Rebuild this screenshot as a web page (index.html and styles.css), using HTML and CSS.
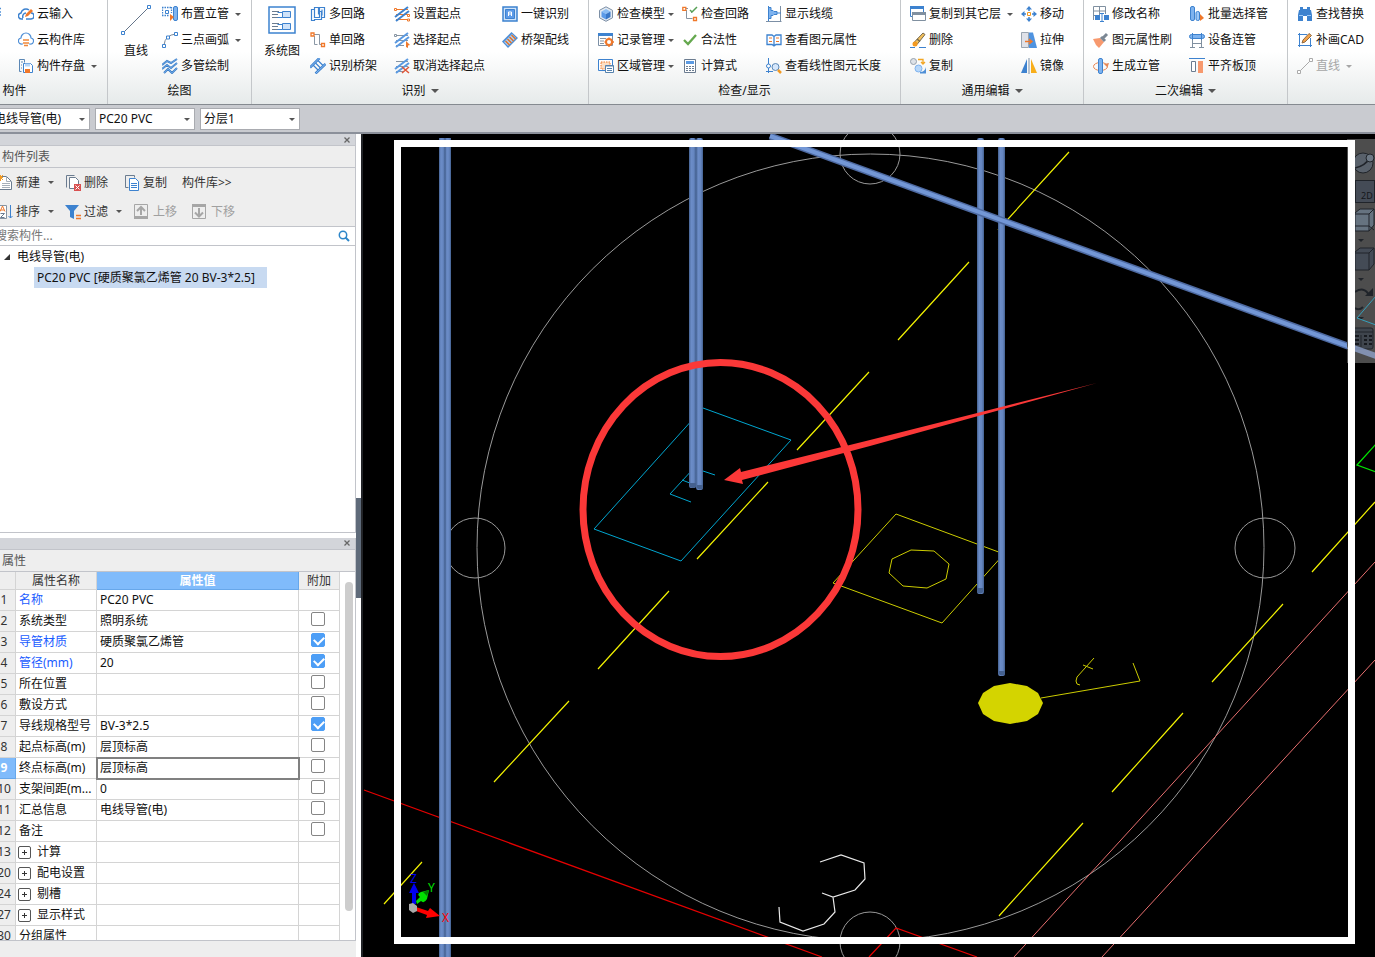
FILE: index.html
```html
<!DOCTYPE html>
<html lang="zh-CN">
<head>
<meta charset="utf-8">
<title>构件列表</title>
<link rel="stylesheet" href="styles.css">
</head>
<body>
<svg class="defs" aria-hidden="true">
  <symbol id="cloud-pen" viewBox="0 0 16 16"><path d="M5 13H4a3 3 0 0 1-1-6 5 5 0 0 1 8-3M13 7a3 3 0 0 1 0 6H8M5 12c-1-3 1-5 3-5" fill="none" stroke="#3d82cf" stroke-width="1.5"/><path d="M7 11l1-3 5-5 2 2-5 5z" fill="#f0782a"/></symbol>
  <symbol id="cloud-db" viewBox="0 0 16 16"><path d="M5 12H4a3 3 0 0 1-1-6 5 5 0 0 1 10 0 3 3 0 0 1-1 6h-1" fill="none" stroke="#4f8fd6" stroke-width="1.2"/><path d="M5 8h6M5 11h6M6 13.500h4" stroke="#f0883a" stroke-width="1.600"/></symbol>
  <symbol id="disk" viewBox="0 0 16 16"><path d="M1.500 13.500v-12h5v3M1.500 13.500h2M3 4h2M3 7h1M3 10h1" fill="none" stroke="#5b87b5"/><path d="M5.500 5.500h7l2 2v7h-9z" fill="#fff" stroke="#3d82cf"/><path d="M7 5.500h5v3H7z" fill="#b8d6f6"/><path d="M7 11h5v4H7z" fill="#f0782a"/></symbol>
  <symbol id="line" viewBox="0 0 30 30"><path d="M3 27L27 3" stroke="#65758a"/><path d="M.5 26.500h3v3h-3zM26.500.5h3v3h-3z" fill="#fff" stroke="#3d82cf"/></symbol>
  <symbol id="riser" viewBox="0 0 16 16"><path d="M0 1.500h10M0 9.500h7M.5 1v9M9.500 1v6" fill="none" stroke="#3d82cf" stroke-width="1.300" stroke-dasharray="1.500 1"/><path d="M3.500 4.500h3v3h-3z" fill="none" stroke="#3d82cf"/><rect x="11.500" y=".5" width="4" height="14" rx="1.500" fill="#7eb3ef" stroke="#3d82cf"/><path d="M8 8l4 3-4 4z" fill="#f0782a"/></symbol>
  <symbol id="arc" viewBox="0 0 16 16"><path d="M2 13Q3 3 14 2" fill="none" stroke="#7a8796"/><path d="M.5 12.500h3v3h-3zM12.500.5h3v3h-3zM4.500 4h3v3h-3z" fill="#fff" stroke="#3d82cf"/></symbol>
  <symbol id="pipes" viewBox="0 0 16 16"><path d="M0 7l5-4 4 2 6-4M0 11l5-4 4 3 6-5M2 15l4-4 4 4 5-5" fill="none" stroke="#3d7fc8" stroke-width="2"/><path d="M0 7l5-4 4 2 6-4M0 11l5-4 4 3 6-5M2 15l4-4 4 4 5-5" fill="none" stroke="#83b8f2" stroke-width=".6"/></symbol>
  <symbol id="system" viewBox="0 0 28 28"><path d="M1 1h26v26H1z" fill="#fff" stroke="#3d82cf" stroke-width="1.500"/><path d="M4 5.500h7M4 11.500h7M4 17.500h7M4 23.500h7M4 8.500h6M4 20.500h6" stroke="#6b7c90"/><path d="M9.500 6.500h5v5h-5M9.500 18.500h5v5h-5" fill="none" stroke="#3d82cf"/><path d="M14.500 5.500h8v6h-8zM14.500 17.500h8v6h-8z" fill="#cfe3fa" stroke="#3d82cf"/></symbol>
  <symbol id="multi" viewBox="0 0 16 16"><path d="M1.500 3.500h3v8h5v-6h2v8h-7v1h-3zM4.500 3.500v-2h4v7M9.500 5.500v-4h5v10h-3M12 3.500v6" fill="none" stroke="#3d82cf" stroke-width="1.200"/></symbol>
  <symbol id="single" viewBox="0 0 16 16"><path d="M4 2.500h5.500v10H13M4.500 4v8.500h3" fill="none" stroke="#8a97a5"/><path d="M1 1h3v3H1zM11.500 11.500h3v3h-3z" fill="#fff" stroke="#f0782a" stroke-width="1.300"/></symbol>
  <symbol id="bridge" viewBox="0 0 16 16"><path d="M3 7l6 6M5.500 5l6 6M8 2.500l6 6" stroke="#3d82cf" stroke-width="1.200"/><path d="M0 9.500L9.500 0M5.500 15.500L15.500 6" stroke="#3d82cf" stroke-width="2.500"/><path d="M0 9.500L9.500 0M5.500 15.500L15.500 6" stroke="#9cc8f8" stroke-width=".8"/></symbol>
  <symbol id="set-start" viewBox="0 0 16 16"><path d="M2 3.500h12M2 8.500h12M2 13.500h12" stroke="#f0782a"/><path d="M1 11L14 1M2 15L15 5" stroke="#3d82cf" stroke-width="2"/><path d="M.5 2.500h2v2h-2zM13.500 8.500h2v2h-2zM13.500 13h2v2h-2z" fill="#fff" stroke="#f0782a"/></symbol>
  <symbol id="pick-start" viewBox="0 0 16 16"><path d="M2 3.500h12M2 8.500h12M2 13.500h8" stroke="#8794a2"/><path d="M1 11L14 1M2 15L15 5" stroke="#5b9ae2" stroke-width="2"/><path d="M.5 2.500h2v2h-2z" fill="#fff" stroke="#8794a2"/><path d="M12 9l4 4-2 .5v2.500l-2-1z" fill="#f0782a"/></symbol>
  <symbol id="drop-start" viewBox="0 0 16 16"><path d="M2 3.500h12M2 8.500h12M2 13.500h8" stroke="#8794a2"/><path d="M1 11L14 1M2 15L15 5" stroke="#5b9ae2" stroke-width="2"/><path d="M8 9l7 6M15 9l-7 6" stroke="#df5638" stroke-width="1.500"/></symbol>
  <symbol id="onekey" viewBox="0 0 16 16"><path d="M1 1h14v14H1z" fill="#cfe3fa" stroke="#3d82cf" stroke-width="1.500"/><path d="M3.500 3.500h9v9h-9z" fill="#5b9ae8" stroke="#3d82cf"/><path d="M6.500 10V6h3v4M6.500 8h3" fill="none" stroke="#fff"/></symbol>
  <symbol id="bridge-wire" viewBox="0 0 16 16"><path d="M0 9.500L9.500 0 16 6 6 16z" fill="#4f8fd6"/><path d="M2 10l8-8 4 4-8 8z" fill="#a9cdf5"/><path d="M3.500 9l4 4M5.500 7l4 4M7.500 5l4 4M9.500 3l4 4" stroke="#e2701f" stroke-width="1.300"/></symbol>
  <symbol id="cube" viewBox="0 0 16 16"><path d="M8 .8l6.500 3.500v7.500L8 15.300l-6.500-3.500V4.300z" fill="#e3eaf2" stroke="#7c8fa5"/><path d="M8 3l4.500 2.500L8 8 3.500 5.500z" fill="#8bbdf4"/><path d="M3.500 5.500L8 8v5.500L3.500 11z" fill="#5b9ae8"/><path d="M12.500 5.500L8 8v5.500l4.500-2.500z" fill="#3977c7"/></symbol>
  <symbol id="record" viewBox="0 0 16 16"><path d="M.5 1.500h14v12H.5z" fill="#fff" stroke="#7c8fa5"/><path d="M0 1h15v3H0z" fill="#3d82cf"/><path d="M2 6.500h6M2 9h4M2 11.500h4" stroke="#8794a2"/><circle cx="11" cy="10" r="3" fill="#fff" stroke="#f0782a" stroke-width="2"/><path d="M11 5.500v2M11 12.500V15M6.500 10h2M13.500 10H16" stroke="#f0782a" stroke-width="1.500"/></symbol>
  <symbol id="area" viewBox="0 0 16 16"><path d="M.5 1.500h14v11H.5z" fill="#fff" stroke="#3d82cf"/><path d="M3 4h9v7H3z" fill="#fde0c6" stroke="#f0782a" stroke-dasharray="1.500 1"/><path d="M7.500 7.500h8v7h-8z" fill="#fff" stroke="#5682ad"/><path d="M7.500 8h8M9 10.500h5M9 12.500h5" stroke="#5682ad"/></symbol>
  <symbol id="check-loop" viewBox="0 0 16 16"><path d="M3 2.500h3M4.500 4v8.500h6M9.500 7V5" fill="none" stroke="#8794a2"/><path d="M.8 1.300h3v3h-3zM11.500 11.500h3v3h-3z" fill="#fff" stroke="#f0782a" stroke-width="1.300"/><path d="M8 4l2 2 5-5" fill="none" stroke="#56a056" stroke-width="1.500"/></symbol>
  <symbol id="tick" viewBox="0 0 16 16"><path d="M2 8l4 4 8-9" fill="none" stroke="#65a84e" stroke-width="2.300"/></symbol>
  <symbol id="calc" viewBox="0 0 16 16"><path d="M2.500 1.500h11v13h-11z" fill="#fff" stroke="#6b7c90"/><path d="M4 3h8v3H4z" fill="#5b9ae2"/><path d="M4 8.500h8M4 10.500h8M4 12.500h8" stroke="#6b7c90" stroke-dasharray="2 1"/></symbol>
  <symbol id="cable" viewBox="0 0 16 16"><path d="M0 15.500h15.500M14.500 0v15" stroke="#7c8fa5"/><path d="M2.500 0v15" stroke="#3d82cf"/><path d="M2.500 1.500h2.500v3h2l1 1h3v3H8l-1 1H5v3H2.500z" fill="#7eb3ef" stroke="#3d82cf"/><path d="M11 7h4" stroke="#3d82cf"/></symbol>
  <symbol id="book" viewBox="0 0 16 16"><path d="M1 3h5l2 1.500L10 3h5v9.500h-5L8 14l-2-1.500H1zM8 4v9" fill="#fff" stroke="#3d82cf" stroke-width="1.300"/><path d="M3 6h3M3 9.500h3M10 6h3M10 9.500h3" stroke="#f0782a"/></symbol>
  <symbol id="length" viewBox="0 0 16 16"><path d="M2.500 0v15M0 13.500h7" stroke="#3d82cf"/><circle cx="2.500" cy="8" r="2" fill="#fff" stroke="#3d82cf"/><circle cx="9.500" cy="9" r="3.500" fill="#d6e7fb" stroke="#5b87b5"/><path d="M12 12l3 3" stroke="#f39a22" stroke-width="2.500"/></symbol>
  <symbol id="copy-layer" viewBox="0 0 16 16"><path d="M.5 1.500h13v9H.5z" fill="#fff" stroke="#3d82cf"/><path d="M0 0h14v3H0z" fill="#3d82cf"/><path d="M2.500 6.500h13v8h-13z" fill="#fff" stroke="#8090a0"/><path d="M2 6h14v3H2z" fill="#8090a0"/></symbol>
  <symbol id="move" viewBox="0 0 16 16"><path d="M8 0l3 3.500H5zM8 16l3-3.500H5zM0 8l3.500-3v6zM16 8l-3.500-3v6z" fill="#3d82cf"/><path d="M8 3v2M8 11v2M3 8h2M11 8h2" stroke="#3d82cf" stroke-width="1.500"/><path d="M6.500 6.500h3v3h-3z" fill="#fff" stroke="#f39a22"/></symbol>
  <symbol id="erase" viewBox="0 0 16 16"><path d="M0 15.500h5M9 15.500h7" stroke="#3d82cf"/><path d="M3.500 11L13 1l2 1.500-8 10z" fill="#f3c05a" stroke="#77694d"/><path d="M7 7l3 2.500" stroke="#77694d" stroke-width="1.500"/><circle cx="5" cy="12" r="2.500" fill="#f39a22"/></symbol>
  <symbol id="stretch" viewBox="0 0 16 16"><path d="M.5.5h7v15h-7z" fill="#dfe1e8" stroke="#9aa5b1"/><path d="M8 .5h4L16 16H8z" fill="#4f93e0"/><path d="M4 9.500h6M8 7l3 2.500L8 12" fill="none" stroke="#f0782a" stroke-width="1.400"/></symbol>
  <symbol id="copy-round" viewBox="0 0 16 16"><circle cx="3.500" cy="3.500" r="3" fill="#dde2e8" stroke="#95a0ac"/><path d="M8 1.500h5v4M11 4l2 2 2-2" fill="none" stroke="#f3a622" stroke-width="1.300"/><circle cx="8.500" cy="10.500" r="3.500" fill="#b8d8fa" stroke="#7eb3ef"/><path d="M10 15.500h6V9q-1 5-6 5z" fill="#4f8fd6"/></symbol>
  <symbol id="mirror" viewBox="0 0 16 16"><path d="M6 1v14H0z" fill="#3d82cf"/><path d="M10 1v14h6z" fill="#f8ae1a"/><path d="M8 0v16" stroke="#7c8fa5"/></symbol>
  <symbol id="rename" viewBox="0 0 16 16"><path d="M.5 14V.5h12V8M.5 5h12M6.500.5V10M.5 9.500h6" fill="none" stroke="#8090a0"/><path d="M2 9h5v5H2zM11 9h5v5h-5z" fill="#3d82cf"/><path d="M7 7.500h4M9 7.500v8M7 15.500h4" stroke="#3d82cf"/></symbol>
  <symbol id="brush" viewBox="0 0 16 16"><path d="M0 7l7-1 4 4-5 6-3-3z" fill="#f7996e"/><path d="M8 5l4 4M10 6l4-4" stroke="#7b8794" stroke-width="3"/></symbol>
  <symbol id="make-riser" viewBox="0 0 16 16"><ellipse cx="7.500" cy="8.500" rx="7" ry="4" fill="none" stroke="#e88755"/><rect x="5.500" y=".5" width="4" height="15" rx="1.500" fill="#7eb3ef" stroke="#3d82cf"/><path d="M11 6l3.500 3.500L16 5z" fill="#e88755"/></symbol>
  <symbol id="batch" viewBox="0 0 16 16"><rect x="1.500" y=".5" width="4" height="14" rx="1.500" fill="#7eb3ef" stroke="#3d82cf"/><rect x="7" y="5.500" width="3.500" height="9" rx="1.500" fill="#9cc8f8" stroke="#3d82cf"/><path d="M11 8l4 4-4 3z" fill="#f0782a"/></symbol>
  <symbol id="device" viewBox="0 0 16 16"><path d="M3.500 7v8M12.500 7v8M3 11.500h10M1 15.500h5M10 15.500h5" stroke="#8090a0"/><rect x=".5" y="2.500" width="15" height="4" rx="2" fill="#7eb3ef" stroke="#3d82cf"/><path d="M3.500 1v7M12.500 1v7" stroke="#3d82cf"/></symbol>
  <symbol id="align-top" viewBox="0 0 16 16"><path d="M0 .5h16" stroke="#3d82cf"/><path d="M2.500 3.500h4v10h-4z" fill="#fff" stroke="#6b7c90"/><path d="M9 3h5v12H9z" fill="#f7996e"/></symbol>
  <symbol id="find" viewBox="0 0 16 16"><path d="M3 1h3v2h4V1h3v3h1l1 5v6h-5v-5H6v5H1V9l1-5h1z" fill="#3d82cf"/><path d="M2 9.500h4M10 9.500h4" stroke="#9cc8f8"/></symbol>
  <symbol id="cad" viewBox="0 0 16 16"><path d="M1 2.500h9M2.500 1v14M1 13.500h14M13.500 6v9" stroke="#3d82cf"/><path d="M5 11l1-3 6-6.500 2.500 2L8 10z" fill="#f3a24a" stroke="#8d6a45"/></symbol>
  <symbol id="line-off" viewBox="0 0 16 16"><path d="M2 14L14 2" stroke="#aaa"/><path d="M.5 12.500h3v3h-3zM12.500.5h3v3h-3z" fill="#fff" stroke="#aaa"/></symbol>
  <symbol id="new" viewBox="0 0 16 16"><path d="M2.500 1.500h7l5 5v8h-12z" fill="#fff" stroke="#6b7c90"/><path d="M9.500 1.500v5h5M5 8.500h8M5 10.500h8M5 12.500h8" fill="none" stroke="#a6afba"/><path d="M1 0l5 5M6 0L1 5M3.500 0v6M0 2.500h6" stroke="#f39a22"/></symbol>
  <symbol id="del-doc" viewBox="0 0 16 16"><path d="M1.500 12.500v-12h8" fill="none" stroke="#6b7c90"/><path d="M4.500 2.500h6l3 3v8h-9z" fill="#fff" stroke="#6b7c90"/><path d="M9 9h7v7H9z" fill="#d95050"/><path d="M10.500 10.500l4 4M14.500 10.500l-4 4" stroke="#fff"/></symbol>
  <symbol id="copy-doc" viewBox="0 0 16 16"><path d="M1.500 12.500v-12h9v2M1.500 12.500h3" fill="none" stroke="#6b7c90"/><path d="M5.500 3.500h6l3 3v9h-9z" fill="#fff" stroke="#3d82cf"/><path d="M7 8.500h6M7 10.500h6M7 12.500h6" stroke="#3d82cf"/></symbol>
  <symbol id="sort" viewBox="0 0 16 16"><path d="M.5 1.500h9v13h-9z" fill="#fff" stroke="#8794a2"/><path d="M3 7.500L5.500 2 8 7.500M4 6h3" fill="none" stroke="#f0782a"/><path d="M3.500 9.500h4l-4 4h4" fill="none" stroke="#6b7c90"/><path d="M13.500 1v13M11.500 12l2 2 2-2" fill="none" stroke="#3d82cf"/></symbol>
  <symbol id="filter" viewBox="0 0 16 16"><path d="M0 1h14L9 7v8l-4-2V7z" fill="#3d82cf"/><path d="M11 11.500h5M11 14.500h5" stroke="#f0782a" stroke-width="1.400"/></symbol>
  <symbol id="up" viewBox="0 0 16 16"><path d="M.5.5h13v14H.5z" fill="#eee" stroke="#a6a6a6"/><path d="M0 12h14v3H0zM6 4h2v7H6z" fill="#a6a6a6"/><path d="M3 7l4-4 4 4" fill="none" stroke="#a6a6a6" stroke-width="2"/></symbol>
  <symbol id="down" viewBox="0 0 16 16"><path d="M.5.5h13v14H.5z" fill="#eee" stroke="#a6a6a6"/><path d="M0 0h14v3H0zM6 4h2v8H6z" fill="#a6a6a6"/><path d="M3 8.500l4 4 4-4" fill="none" stroke="#a6a6a6" stroke-width="2"/></symbol>
  <symbol id="search" viewBox="0 0 12 12"><circle cx="5" cy="5" r="3.700" fill="none" stroke="#2d86c9" stroke-width="1.500"/><path d="M7.500 7.500L11 11" stroke="#2d86c9" stroke-width="2"/></symbol>
  <symbol id="cross" viewBox="0 0 6 6"><path d="M.5.500l5 5M5.500.5l-5 5" stroke="#666" stroke-width="1.300"/></symbol>
  <symbol id="tail" viewBox="0 0 16 16"><path d="M10 2.500h6M10 6h6M10 9h6" stroke="#4f8fd6" stroke-width="1.500"/></symbol>
</svg>

<header class="ribbon">
  <section class="group group-component">
    <div class="tools">
      <button class="tool" aria-label="更多"><svg class="icon"><use href="#tail"/></svg></button>
      <button class="tool"><svg class="icon"><use href="#cloud-pen"/></svg>云输入</button>
      <span></span>
      <button class="tool"><svg class="icon"><use href="#cloud-db"/></svg>云构件库</button>
      <span></span>
      <button class="tool"><svg class="icon"><use href="#disk"/></svg>构件存盘<i class="caret"></i></button>
    </div>
    <h2 class="group-name">构件</h2>
  </section>
  <section class="group group-draw">
    <div class="tools">
      <button class="tool-big"><svg class="icon-big"><use href="#line"/></svg>直线</button>
      <button class="tool"><svg class="icon"><use href="#riser"/></svg>布置立管<i class="caret"></i></button>
      <button class="tool"><svg class="icon"><use href="#arc"/></svg>三点画弧<i class="caret"></i></button>
      <button class="tool"><svg class="icon"><use href="#pipes"/></svg>多管绘制</button>
    </div>
    <h2 class="group-name">绘图</h2>
  </section>
  <section class="group group-detect">
    <div class="tools">
      <button class="tool-big"><svg class="icon-big icon-system"><use href="#system"/></svg>系统图</button>
      <button class="tool"><svg class="icon"><use href="#multi"/></svg>多回路</button>
      <button class="tool"><svg class="icon"><use href="#set-start"/></svg>设置起点</button>
      <button class="tool"><svg class="icon"><use href="#onekey"/></svg>一键识别</button>
      <button class="tool"><svg class="icon"><use href="#single"/></svg>单回路</button>
      <button class="tool"><svg class="icon"><use href="#pick-start"/></svg>选择起点</button>
      <button class="tool"><svg class="icon"><use href="#bridge-wire"/></svg>桥架配线</button>
      <button class="tool"><svg class="icon"><use href="#bridge"/></svg>识别桥架</button>
      <button class="tool"><svg class="icon"><use href="#drop-start"/></svg>取消选择起点</button>
    </div>
    <h2 class="group-name">识别<i class="caret caret-wide"></i></h2>
  </section>
  <section class="group group-check">
    <div class="tools">
      <button class="tool"><svg class="icon"><use href="#cube"/></svg>检查模型<i class="caret"></i></button>
      <button class="tool"><svg class="icon"><use href="#check-loop"/></svg>检查回路</button>
      <button class="tool"><svg class="icon"><use href="#cable"/></svg>显示线缆</button>
      <button class="tool"><svg class="icon"><use href="#record"/></svg>记录管理<i class="caret"></i></button>
      <button class="tool"><svg class="icon"><use href="#tick"/></svg>合法性</button>
      <button class="tool"><svg class="icon"><use href="#book"/></svg>查看图元属性</button>
      <button class="tool"><svg class="icon"><use href="#area"/></svg>区域管理<i class="caret"></i></button>
      <button class="tool"><svg class="icon"><use href="#calc"/></svg>计算式</button>
      <button class="tool"><svg class="icon"><use href="#length"/></svg>查看线性图元长度</button>
    </div>
    <h2 class="group-name">检查/显示</h2>
  </section>
  <section class="group group-edit">
    <div class="tools">
      <button class="tool"><svg class="icon"><use href="#copy-layer"/></svg>复制到其它层<i class="caret"></i></button>
      <button class="tool"><svg class="icon"><use href="#move"/></svg>移动</button>
      <button class="tool"><svg class="icon"><use href="#erase"/></svg>删除</button>
      <button class="tool"><svg class="icon"><use href="#stretch"/></svg>拉伸</button>
      <button class="tool"><svg class="icon"><use href="#copy-round"/></svg>复制</button>
      <button class="tool"><svg class="icon"><use href="#mirror"/></svg>镜像</button>
    </div>
    <h2 class="group-name">通用编辑<i class="caret caret-wide"></i></h2>
  </section>
  <section class="group group-second">
    <div class="tools">
      <button class="tool"><svg class="icon"><use href="#rename"/></svg>修改名称</button>
      <button class="tool"><svg class="icon"><use href="#batch"/></svg>批量选择管</button>
      <button class="tool"><svg class="icon"><use href="#brush"/></svg>图元属性刷</button>
      <button class="tool"><svg class="icon"><use href="#device"/></svg>设备连管</button>
      <button class="tool"><svg class="icon"><use href="#make-riser"/></svg>生成立管</button>
      <button class="tool"><svg class="icon"><use href="#align-top"/></svg>平齐板顶</button>
    </div>
    <h2 class="group-name">二次编辑<i class="caret caret-wide"></i></h2>
  </section>
  <section class="group group-last">
    <div class="tools">
      <button class="tool"><svg class="icon"><use href="#find"/></svg>查找替换</button>
      <button class="tool"><svg class="icon"><use href="#cad"/></svg>补画CAD</button>
      <button class="tool" disabled><svg class="icon"><use href="#line-off"/></svg>直线<i class="caret"></i></button>
    </div>
  </section>
</header>

<div class="pickers">
  <span class="picker"><select aria-label="构件类型"><option>电线导管(电)</option></select><i class="caret"></i></span>
  <span class="picker"><select aria-label="构件"><option>PC20 PVC</option></select><i class="caret"></i></span>
  <span class="picker"><select aria-label="分层"><option>分层1</option></select><i class="caret"></i></span>
</div>

<main class="work">
  <aside class="side">
    <section class="panel panel-list">
      <div class="strip"><button class="close" aria-label="关闭"><svg><use href="#cross"/></svg></button></div>
      <h2 class="panel-title">构件列表</h2>
      <div class="actions">
        <div class="action-row action-row-first">
          <button class="action"><svg class="icon"><use href="#new"/></svg>新建<i class="caret"></i></button>
          <button class="action"><svg class="icon"><use href="#del-doc"/></svg>删除</button>
          <button class="action"><svg class="icon"><use href="#copy-doc"/></svg>复制</button>
          <button class="action">构件库&gt;&gt;</button>
        </div>
        <div class="action-row action-row-second">
          <button class="action"><svg class="icon"><use href="#sort"/></svg>排序<i class="caret"></i></button>
          <button class="action"><svg class="icon"><use href="#filter"/></svg>过滤<i class="caret"></i></button>
          <button class="action" disabled><svg class="icon"><use href="#up"/></svg>上移</button>
          <button class="action" disabled><svg class="icon"><use href="#down"/></svg>下移</button>
        </div>
      </div>
      <div class="search"><input type="text" aria-label="搜索构件" placeholder="搜索构件..."><svg class="search-icon"><use href="#search"/></svg></div>
      <ul class="tree">
        <li><span class="tree-parent"><svg class="twist" viewBox="0 0 8 8"><path d="M7 1v6H1z" fill="#333"/></svg>电线导管(电)</span>
          <ul class="tree-children"><li><span class="tree-item">PC20 PVC [硬质聚氯乙烯管 20 BV-3*2.5]</span></li></ul>
        </li>
      </ul>
    </section>
    <section class="panel panel-props">
      <div class="strip"><button class="close" aria-label="关闭"><svg><use href="#cross"/></svg></button></div>
      <h2 class="panel-title">属性</h2>
      <div class="props">
        <table class="grid">
          <colgroup><col class="col-no"><col class="col-name"><col class="col-value"><col class="col-extra"></colgroup>
          <thead><tr><th></th><th>属性名称</th><th class="active">属性值</th><th>附加</th></tr></thead>
          <tbody>
            <tr><th>1</th><td class="key">名称</td><td>PC20 PVC</td><td></td></tr>
            <tr><th>2</th><td>系统类型</td><td>照明系统</td><td class="tickcell"><input type="checkbox" aria-label="系统类型"></td></tr>
            <tr><th>3</th><td class="key">导管材质</td><td>硬质聚氯乙烯管</td><td class="tickcell"><input type="checkbox" aria-label="导管材质" checked></td></tr>
            <tr><th>4</th><td class="key">管径(mm)</td><td>20</td><td class="tickcell"><input type="checkbox" aria-label="管径" checked></td></tr>
            <tr><th>5</th><td>所在位置</td><td></td><td class="tickcell"><input type="checkbox" aria-label="所在位置"></td></tr>
            <tr><th>6</th><td>敷设方式</td><td></td><td class="tickcell"><input type="checkbox" aria-label="敷设方式"></td></tr>
            <tr><th>7</th><td>导线规格型号</td><td>BV-3*2.5</td><td class="tickcell"><input type="checkbox" aria-label="导线规格型号" checked></td></tr>
            <tr><th>8</th><td>起点标高(m)</td><td>层顶标高</td><td class="tickcell"><input type="checkbox" aria-label="起点标高"></td></tr>
            <tr><th class="active">9</th><td>终点标高(m)</td><td class="editing">层顶标高</td><td class="tickcell"><input type="checkbox" aria-label="终点标高"></td></tr>
            <tr><th>10</th><td>支架间距(m...</td><td>0</td><td class="tickcell"><input type="checkbox" aria-label="支架间距"></td></tr>
            <tr><th>11</th><td>汇总信息</td><td>电线导管(电)</td><td class="tickcell"><input type="checkbox" aria-label="汇总信息"></td></tr>
            <tr><th>12</th><td>备注</td><td></td><td class="tickcell"><input type="checkbox" aria-label="备注"></td></tr>
            <tr><th>13</th><td><button class="expand" aria-label="展开计算"></button>计算</td><td></td><td></td></tr>
            <tr><th>20</th><td><button class="expand" aria-label="展开配电设置"></button>配电设置</td><td></td><td></td></tr>
            <tr><th>24</th><td><button class="expand" aria-label="展开剔槽"></button>剔槽</td><td></td><td></td></tr>
            <tr><th>27</th><td><button class="expand" aria-label="展开显示样式"></button>显示样式</td><td></td><td></td></tr>
            <tr><th>30</th><td>分组属性</td><td></td><td></td></tr>
          </tbody>
        </table>
        <div class="scroll"><div class="thumb"></div></div>
      </div>
    </section>
  </aside>
  <div class="splitter"><button class="collapse" aria-label="收起"></button></div>

  <section class="viewport" aria-label="三维视图">
    <svg class="scene" viewBox="361 134 1014 823" preserveAspectRatio="xMinYMin slice">
      <defs>
        <linearGradient id="pipe" x1="0" x2="1" y1="0" y2="0"><stop offset="0" stop-color="#43608f"/><stop offset=".3" stop-color="#6c8dc8"/><stop offset=".7" stop-color="#6586c0"/><stop offset="1" stop-color="#43608f"/></linearGradient>
      </defs>
      <g fill="none" stroke="#999">
        <circle cx="870.500" cy="547.500" r="393.500"/>
        <circle cx="870" cy="154" r="30"/><circle cx="475" cy="548" r="30"/><circle cx="1265" cy="548" r="30"/><circle cx="870" cy="942" r="30"/>
      </g>
      <path d="M1069 152L998 230M969 262L898 340M869 372L797 450M768 482L697 559M669 591L598 669M569 701L494 782M422 862L384 904M1375 502L1312 572M1283 604L1212 682M1183 713L1112 792M1083 823L999 916" stroke="#f2f200" stroke-width="1.200"/>
      <path d="M1375 562L1014 957M1375 660L1102 957" stroke="#e66e6e"/>
      <path d="M364 790L822 957M869 957L896 928L977 957" fill="none" stroke="#e60000" stroke-width="1.200"/>
      <path d="M1376 444L1357 465L1376 472" fill="none" stroke="#00e600" stroke-width="1.300"/>
      <g fill="none" stroke="#00a6d0"><path d="M703 408L791 440L681 561L594 529ZM715 475L694 468L670 494L691 502M682 480L695 485"/></g>
      <g fill="none" stroke="#cccc00"><path d="M896 514L1004 554L942 623L833 583ZM892 559L911 550L934 551L949 564L946 579L927 588L903 586L889 573ZM1041 698L1140 681L1133 663M1094 658L1077 677L1076 681L1077 684L1080 685M1083 665L1093 669"/></g>
      <path d="M1010 683L1027 686L1038 693L1043 703L1038 714L1027 721L1010 724L994 721L983 714L978 703L983 693L994 686Z" fill="#d4d400"/>
      <g fill="url(#pipe)">
        <rect x="439" y="138" width="6" height="819"/><rect x="445" y="138" width="6" height="819"/>
        <rect x="689" y="138" width="7" height="350" rx="2"/><rect x="696" y="138" width="7" height="352" rx="2"/>
        <rect x="977" y="138" width="7" height="456" rx="2"/><rect x="998" y="138" width="7" height="538" rx="2"/>
      </g>
      <path d="M690 483h6v4q-3 2-6 0zM697 485h6v3q-3 3-6 0zM977 588h6v4q-3 3-6 0zM999 671h6v3q-3 3-6 0z" fill="#45618f"/>
      <path d="M770 136L1375 356" stroke="#4d69a0" stroke-width="7"/><path d="M770 136L1375 356" stroke="#7397d6" stroke-width="4"/>
      <path d="M820 862L841 855L864 863L865 879L855 890L833 897L822 893M833 897L835 912L824 924L803 931L780 922L779 907" fill="none" stroke="#e8e8e8" stroke-width="1.200"/>
      <g class="axes">
        <path d="M409 893L414 883L419 893H416V904H412V893Z" fill="#0000f0"/>
        <path d="M416 901L420 897Q416 894 421 892L429 890L427 899Q424 904 421 901L417 904Z" fill="#00e000"/><path d="M423 892L429 890L427 896Z" fill="#008000"/>
        <path d="M416 907L428 911L430 908L440 916L426 918L427 915L416 911Z" fill="#f00"/>
        <path d="M409 904L413 903L417 906V911L413 913L409 910Z" fill="#aaa"/>
        <text x="410" y="883" fill="#0000f0">Z</text><text x="428" y="892" fill="#00e000">Y</text><text x="442" y="922" fill="#f00">X</text>
      </g>
    </svg>
    <nav class="view-tools" aria-label="视图工具">
      <button aria-label="动态观察"><svg viewBox="0 0 20 26"><circle cx="8" cy="14" r="10" fill="#59616b" stroke="#20242a"/><path d="M0 19Q10 17 16 8" fill="none" stroke="#20242a" stroke-width="1.500"/><circle cx="15" cy="9" r="4" fill="#6d7884" stroke="#20242a"/></svg></button>
      <button class="view-2d">2D</button>
      <button aria-label="线框"><svg viewBox="0 0 20 26"><path d="M0 5L5 1h14v16l-5 6H0z" fill="#667380" stroke="#20242a"/><path d="M0 6h14v17M14 6l5-5M0 18h14l5 4" fill="none" stroke="#20242a"/></svg></button>
      <i class="caret"></i>
      <button aria-label="实体"><svg viewBox="0 0 20 26"><path d="M0 5L5 1h14v16l-5 6H0z" fill="#444b56" stroke="#20242a"/><path d="M0 6h14v17M14 6l5-5" fill="none" stroke="#20242a"/></svg></button>
      <i class="caret"></i>
      <button aria-label="旋转"><svg viewBox="0 0 20 26"><path d="M0 6Q9 0 14 9M0 22Q4 25 8 21" fill="none" stroke="#20242a" stroke-width="2"/><path d="M18 2v8h-8z" fill="#20242a"/></svg></button>
      <i class="caret"></i>
      <button aria-label="显示设置"><svg viewBox="0 0 20 26"><rect x="-8" y="3" width="26" height="21" rx="2" fill="#3f454d" stroke="#20242a"/><path d="M0 7h18M6 10v12" stroke="#20242a"/><path d="M9 11h3M14 11h3M9 15h3M14 15h3M9 19h3M14 19h3M0 11h4M0 15h4M0 19h4" stroke="#171a1f" stroke-width="2"/></svg></button>
    </nav>
    <svg class="scene marks" viewBox="361 134 1014 823" preserveAspectRatio="xMinYMin slice">
      <path d="M1376 296L1357 318L1376 325" fill="none" stroke="#36a0bb"/>
      <path d="M1348 346L1376 356" stroke="#98aedb" stroke-opacity=".7" stroke-width="6"/>
      <rect x="397.500" y="143.500" width="954" height="797" fill="none" stroke="#fff" stroke-width="7"/>
      <ellipse cx="720.500" cy="509.500" rx="137.500" ry="147" fill="none" stroke="#fb3838" stroke-width="7"/>
      <path d="M724 480L740 468L741 472L870 440L1097 383L870 446L742 480L743 484Z" fill="#fb3838"/>
    </svg>
  </section>
</main>
</body>
</html>
```

FILE: styles.css
```css
* { box-sizing: border-box; }

body {
  margin: 0;
  height: 100vh;
  display: flex;
  flex-direction: column;
  overflow: hidden;
  background: #fff;
  color: #111;
  font: 12px/20px "Noto Sans", "Noto Sans CJK SC", sans-serif;
}

button, input, select { font: inherit; color: inherit; }
button { border: 0; padding: 0; background: none; white-space: nowrap; text-align: left; }
h2 { margin: 0; font-size: 12px; font-weight: 400; }
ul { margin: 0; padding: 0; list-style: none; }

.defs { position: absolute; width: 0; height: 0; }

.caret {
  flex: none;
  border: 3px solid transparent;
  border-top-color: #555;
  border-bottom-width: 0;
}
.caret-wide { border-width: 4px 4px 0; margin-left: 5px; }

/* Ribbon */
.ribbon {
  flex: none;
  display: flex;
  height: 105px;
  border-bottom: 1px solid #858a90;
  background: linear-gradient(#fff 50%, #e6eaea);
}
.group {
  flex: none;
  display: flex;
  flex-direction: column;
  padding-top: 1px;
  border-right: 1px solid #c4c7ca;
}
.tools { display: grid; grid-template-rows: repeat(3, 26px); }
.tool { display: flex; align-items: center; gap: 3px; }
.tool .caret { margin-left: 3px; }
.tool:disabled { color: #a6a6a6; }
.tool:disabled .caret { border-top-color: #a6a6a6; }
.icon { flex: none; width: 16px; height: 16px; }
.tool-big {
  grid-row: 1 / 4;
  display: flex;
  flex-direction: column;
  align-items: center;
  gap: 6px;
  padding-top: 4px;
}
.icon-big { width: 30px; height: 30px; }
.icon-system { padding: 1px; }
.group-name {
  display: flex;
  align-items: center;
  justify-content: center;
  height: 24px;
}

.group-component { width: 186px; margin-left: -78px; }
.group-component .tools { grid-template-columns: 33px 1fr; padding-left: 63px; }
.group-draw { width: 144px; }
.group-draw .tools { grid-template-columns: 32px 1fr; column-gap: 10px; padding-left: 12px; }
.group-detect { width: 337px; }
.group-detect .tools { grid-template-columns: 36px 74px 98px 1fr; column-gap: 10px; padding-left: 12px; }
.group-check { width: 312px; }
.group-check .tools { grid-template-columns: 84px 84px 1fr; padding-left: 9px; }
.group-check .tool .caret { margin-left: 0; }
.group-edit { width: 183px; }
.group-edit .tools { grid-template-columns: 111px 1fr; padding-left: 9px; }
.group-second { width: 204px; }
.group-second .tools { grid-template-columns: 96px 1fr; padding-left: 9px; }
.group-last { flex: 1; border-right: 0; }
.group-last .tools { padding-left: 9px; }

/* Pickers */
.pickers {
  flex: none;
  display: flex;
  gap: 5px;
  height: 29px;
  padding: 3px 0;
  margin-left: -10px;
  background: #c9cbd0;
  border-bottom: 2px solid #8b909a;
}
.picker { display: flex; align-items: center; width: 100px; height: 22px; }
.picker select {
  width: 100%;
  height: 22px;
  padding: 0 3px;
  border: 1px solid #a9abb0;
  border-radius: 0;
  background: #fff;
  appearance: none;
}
.picker .caret { margin-left: -11px; }

/* Side panels */
.work { flex: 1; display: flex; min-height: 0; }
.side {
  flex: none;
  display: flex;
  flex-direction: column;
  gap: 5px;
  width: 356px;
  padding-bottom: 16px;
  background: linear-gradient(#fff 90%, #eee 90%);
}
.panel {
  display: flex;
  flex-direction: column;
  min-height: 0;
  overflow: hidden;
  border: solid #c2c4ca;
  border-width: 0 1px 1px 0;
}
.panel-list { flex: 1 1 398px; }
.panel-props { flex: 1 1 403px; background: #fff; }
.strip {
  flex: none;
  display: flex;
  align-items: center;
  justify-content: flex-end;
  height: 12px;
  padding-right: 5px;
  background: #d3d5da;
  border-bottom: 1px solid #c2c4ca;
}
.close svg { display: block; width: 6px; height: 6px; }
.panel-title {
  flex: none;
  height: 22px;
  padding-left: 2px;
  background: #eee;
  border-bottom: 1px solid #c2c4ca;
  color: #555;
  line-height: 21px;
}
.actions {
  flex: none;
  height: 59px;
  background: #eee;
  border-bottom: 1px solid #c2c4ca;
  overflow: hidden;
}
.action-row { display: grid; height: 29px; margin-left: -3px; color: #333; }
.action-row-first { grid-template-columns: 68px 59px 58px 1fr; }
.action-row-second { grid-template-columns: 68px 69px 58px 1fr; }
.action { display: flex; align-items: center; gap: 3px; }
.action .caret { margin-left: 5px; }
.action:disabled { color: #a0a0a0; }
.search {
  flex: none;
  display: flex;
  align-items: center;
  height: 19px;
  padding-right: 5px;
  border-bottom: 1px solid #c2c4ca;
}
.search input {
  flex: 1;
  height: 18px;
  margin-left: -5px;
  padding: 0;
  border: 0;
  outline: 0;
  background: none;
}
.search input::placeholder { color: #777; }
.search-icon { width: 12px; height: 12px; }
.tree { line-height: 21px; }
.tree-parent { display: flex; align-items: center; gap: 6px; padding-left: 3px; }
.twist { width: 8px; height: 8px; }
.tree-children { padding-left: 34px; }
.tree-item { display: inline-block; padding: 0 12px 0 3px; background: #c8daf1; }

/* Property grid */
.props { flex: 1; display: flex; min-height: 0; overflow: hidden; }
.grid {
  flex: 1;
  align-self: flex-start;
  margin-left: -7px;
  border-collapse: separate;
  border-spacing: 0;
  table-layout: fixed;
}
.col-no { width: 23px; }
.col-name { width: 81px; }
.col-extra { width: 41px; }
.grid th, .grid td {
  height: 21px;
  padding: 0 0 0 3px;
  border: solid #d4d4d4;
  border-width: 0 1px 1px 0;
  line-height: 20px;
  white-space: nowrap;
  overflow: hidden;
  text-align: left;
  font-weight: 400;
}
.grid th { padding: 0; background: #eee; color: #333; text-align: center; }
.grid thead th { height: 18px; line-height: 17px; }
.grid th.active { background: #80bbfb; color: #fff; font-weight: 700; border-color: #67a7ea; }
.grid .key { color: #1a5cff; }
.grid .editing { outline: 2px solid #808080; outline-offset: -1px; }
.grid .tickcell { padding: 0; text-align: center; }
.tickcell input {
  appearance: none;
  display: block;
  width: 14px;
  height: 14px;
  margin: 0 12px 3px;
  border: 1px solid #858585;
  border-radius: 2px;
  background: #fff;
}
.tickcell input:checked { background: #4d9ef6; border-color: #4d9ef6; }
.tickcell input:checked::after {
  content: "";
  display: block;
  width: 8px;
  height: 5px;
  margin: 2px;
  border: solid #fff;
  border-width: 0 0 2px 2px;
  transform: rotate(-45deg);
}
.expand {
  display: inline-block;
  width: 13px;
  height: 13px;
  margin: 0 6px 0 -1px;
  border: 1px solid #555;
  border-radius: 2px;
  background:
    linear-gradient(#333, #333) center / 5px 1px no-repeat,
    linear-gradient(#333, #333) center / 1px 5px no-repeat;
  vertical-align: -2px;
}
.scroll { flex: none; width: 15px; padding: 10px 1px 0 5px; }
.thumb { width: 8px; height: 92%; border-radius: 4px; background: #cdcdcd; }

.splitter { flex: none; display: flex; align-items: center; width: 5px; padding-top: 4px; background: #fff; }
.collapse { width: 5px; height: 100px; background: #5f6b7a; }

/* 3D view */
.viewport { flex: 1; position: relative; min-width: 0; background: #000; border-left: 2px solid #222428; overflow: hidden; }
.scene { position: absolute; top: 0; left: -2px; width: calc(100% + 2px); height: 100%; }
.marks { pointer-events: none; }
.axes { font: 12px "Noto Sans", sans-serif; }
.view-tools {
  position: absolute;
  top: 5px;
  right: 0;
  display: flex;
  flex-direction: column;
  align-items: flex-end;
  gap: 5px;
  width: 28px;
  padding: 10px 0 12px;
  background: #4d4d4d;
}
.view-tools button { flex: none; width: 20px; height: 26px; }
.view-tools svg { display: block; width: 20px; height: 26px; }
.view-tools .caret { margin-right: 11px; border-top-color: #20242a; }
.view-tools .view-2d {
  height: 23px;
  padding: 8px 0 0 5px;
  background: #444b56;
  border: 1px solid #20242a;
  color: #14171b;
  font-size: 9px;
  line-height: 12px;
}
```
